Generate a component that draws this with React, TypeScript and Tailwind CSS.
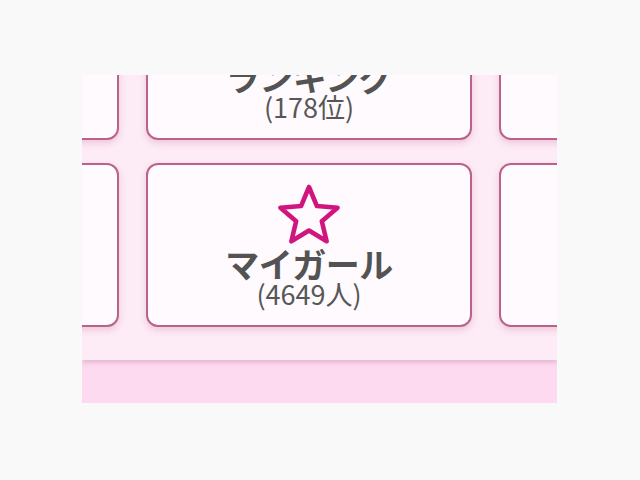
import React from "react";

function StarIcon() {
  return (
    <svg width="66" height="61" viewBox="0 0 66 61" fill="none">
      <polygon
        points="33,3 40.94,22.08 61.53,23.73 45.84,37.17 50.63,57.27 33,46.5 15.37,57.27 20.16,37.17 4.47,23.73 25.06,22.08"
        stroke="#d0157f"
        strokeWidth="4.6"
        strokeLinejoin="round"
        fill="none"
      />
    </svg>
  );
}

function Card({ title, sub, icon }: { title?: string; sub?: string; icon?: boolean }) {
  return (
    <div className="h-[164px] w-[326px] shrink-0 rounded-[12px] border-2 border-[#b9638a] bg-[#fefafd] shadow-[0_3px_6px_rgba(190,90,140,0.25)] flex flex-col items-center">
      {title && (
        <>
          <div className="mt-[19px] h-[61px] flex items-center justify-center">{icon && <StarIcon />}</div>
          <div className="mt-[1px] text-[34px] leading-[36px] font-bold text-[#535353] tracking-[-0.5px]">{title}</div>
          <div className="-mt-[3px] text-[27px] leading-[30px] text-[#575757]">{sub}</div>
        </>
      )}
    </div>
  );
}

export default function App() {
  return (
    <div
      className="w-[640px] h-[480px] bg-[#f9f9f9] pt-[75px] pl-[82px]"
      style={{ fontFamily: '"Noto Sans CJK JP", "Noto Sans", sans-serif' }}
    >
      <div className="w-[475px] h-[328px] flex flex-col overflow-hidden">
        <div className="relative z-10 h-[285px] shrink-0 overflow-hidden bg-[#fdebf6] shadow-[0_2px_5px_rgba(160,80,120,0.3)]">
          <div className="-ml-[289px] -mt-[99px] grid grid-cols-[326px_326px_326px] gap-x-[27px] gap-y-[23px]">
            <Card />
            <Card title="ランキング" sub="(178位)" />
            <Card />
            <Card />
            <Card title="マイガール" sub="(4649人)" icon />
            <Card />
          </div>
        </div>
        <div className="flex-1 bg-[#fddaf0]" />
      </div>
    </div>
  );
}
